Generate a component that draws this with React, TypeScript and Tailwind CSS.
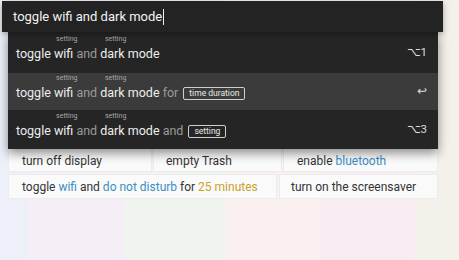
import React from 'react';

const bands = ['#eef0f9', '#f6eef6', '#eff4ef', '#faf0f0', '#f7ecf1', '#f4f1ea'];

const Tagged: React.FC<{ word: string }> = ({ word }) => (
  <span className="relative inline-block">
    {word}
    <span className="absolute left-1/2 -translate-x-[35%] -top-[9px] text-[7px] leading-none text-[#a8a8a8]">
      setting
    </span>
  </span>
);

const Chip: React.FC<{ label: string }> = ({ label }) => (
  <span className="ml-[5px] inline-flex items-center h-[13px] px-[5px] rounded-[2px] border border-[#cfcfcf] text-[8.5px] leading-none text-[#e8e8e8]">
    {label}
  </span>
);

const Suggestion: React.FC<{ active?: boolean; tail?: React.ReactNode; hint: string; h: string }> = ({ active, tail, hint, h }) => (
  <div className={`${h} flex items-center justify-between pl-[8px] pr-[11px] ${active ? 'bg-[#3b3b3b]' : 'bg-[#252525]'}`}>
    <div className="flex items-center text-[12.5px] text-[#ededed] whitespace-nowrap pt-[3px]">
      <span>toggle&nbsp;</span>
      <Tagged word="wifi" />
      <span className="text-[#9a9a9a]">&nbsp;and&nbsp;</span>
      <Tagged word="dark" />
      <span>&nbsp;mode</span>
      {tail}
    </div>
    <span className="text-[11.5px] text-[#dcdcdc] pt-[1px]">{hint}</span>
  </div>
);

const App: React.FC = () => {
  return (
    <div className="relative w-[459px] h-[260px] overflow-hidden" style={{ fontFamily: 'Roboto, "Liberation Sans", sans-serif' }}>
      {/* pastel backdrop */}
      <div className="absolute inset-0 flex">
        <div className="w-[28px]" style={{ background: bands[0] }} />
        <div className="w-[96px]" style={{ background: bands[1] }} />
        <div className="w-[101px]" style={{ background: bands[2] }} />
        <div className="w-[95px]" style={{ background: bands[3] }} />
        <div className="w-[95px]" style={{ background: bands[4] }} />
        <div className="flex-1" style={{ background: bands[5] }} />
      </div>

      <div className="relative flex flex-col">
        {/* search input */}
        <div className="ml-[2px] mt-[1px] w-[441px] h-[31px] bg-[#232323] shadow-[0_2px_6px_rgba(0,0,0,0.35)] flex items-center pl-[11px] text-[13px] text-[#f2f2f2] z-20">
          <span>toggle wifi and dark mode</span>
          <span className="ml-[1px] w-[1px] h-[16px] bg-[#f2f2f2]" />
        </div>

        {/* example commands grid */}
        <div className="ml-[8px] w-[430px] mt-[90px] flex flex-col gap-[2px] text-[12px] text-[#333]">
          <div className="h-[50px] flex gap-[1px]">
            <div className="w-[144px] bg-[#fafafa] border border-[#ececec] flex items-center pt-[28px] pl-[13px]">turn off display</div>
            <div className="w-[129px] bg-[#fafafa] border border-[#ececec] flex items-center pt-[28px] pl-[12px]">empty Trash</div>
            <div className="flex-1 bg-[#fafafa] border border-[#ececec] flex items-center pt-[28px] pl-[13px]">
              enable&nbsp;<span className="text-[#3b8ec2]">bluetooth</span>
            </div>
          </div>
          <div className="h-[25px] flex gap-[2px]">
            <div className="w-[269px] bg-[#fafafa] border border-[#ececec] flex items-center pt-[1px] pl-[13px] whitespace-nowrap">
              toggle&nbsp;<span className="text-[#3b8ec2]">wifi</span>&nbsp;and&nbsp;
              <span className="text-[#3b8ec2]">do not disturb</span>&nbsp;for&nbsp;
              <span className="text-[#c9a12a]">25 minutes</span>
            </div>
            <div className="flex-1 bg-[#fafafa] border border-[#ececec] flex items-center pt-[1px] pl-[11px]">turn on the screensaver</div>
          </div>
        </div>
      </div>

      {/* suggestions dropdown */}
      <div className="absolute left-[8px] top-[32px] w-[430px] flex flex-col shadow-[0_4px_10px_rgba(0,0,0,0.45)] z-10">
        <Suggestion h="h-[41px]" hint="⌥1" />
        <Suggestion h="h-[37px]" active hint="↩" tail={<><span className="text-[#9a9a9a]">&nbsp;for</span><Chip label="time duration" /></>} />
        <Suggestion h="h-[39px]" hint="⌥3" tail={<><span className="text-[#9a9a9a]">&nbsp;and</span><Chip label="setting" /></>} />
      </div>
    </div>
  );
};

export default App;
